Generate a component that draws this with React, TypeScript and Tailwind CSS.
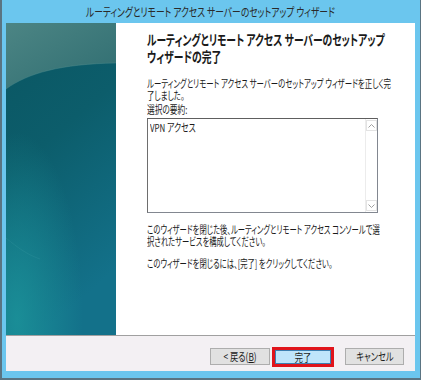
import React from 'react';

const jp = "font-['Noto_Sans_CJK_JP','Noto_Sans',sans-serif] [font-feature-settings:'palt']";

const SidePanel = () => (
  <div className="w-[110px] shrink-0">
    <svg width="110" height="312" viewBox="0 0 110 312" className="block">
      <defs>
        <linearGradient id="base" x1="0" y1="0" x2="0.3" y2="1">
          <stop offset="0" stopColor="#0a5662" />
          <stop offset="0.45" stopColor="#0c5d6b" />
          <stop offset="1" stopColor="#13718a" />
        </linearGradient>
        <radialGradient id="glow" cx="0.1" cy="0.95" r="0.6">
          <stop offset="0" stopColor="#1b9199" stopOpacity="0.9" />
          <stop offset="1" stopColor="#1b9199" stopOpacity="0" />
        </radialGradient>
        <linearGradient id="top" x1="0" y1="0" x2="1" y2="1">
          <stop offset="0" stopColor="#4c8584" />
          <stop offset="1" stopColor="#2f6d71" />
        </linearGradient>
      </defs>
      <rect width="110" height="312" fill="url(#base)" />
      <rect width="110" height="312" fill="url(#glow)" />
      <path d="M0,66 C22,50 55,41 110,40 L110,0 L0,0 Z" fill="url(#top)" />
      <path d="M0,66 C22,50 55,41 110,40" fill="none" stroke="#5a9494" strokeOpacity="0.35" />
      <path d="M0,215 C12,225 22,232 34,236" fill="none" stroke="#3a9aa4" strokeOpacity="0.25" />
    </svg>
  </div>
);

const ListBox = () => (
  <div className="mt-[3px] w-[231px] h-[95px] border border-[#828790] border-t-[#5e5e5e] border-l-[#6e6e6e] bg-white flex">
    <div className={`flex-1 pl-[2px] pt-[1px] text-[11px] leading-[14px] text-[#1a1a1a] ${jp}`}>
      <span className="inline-block origin-left scale-x-[0.72] whitespace-nowrap">VPN アクセス</span>
    </div>
    <div className="w-[12px] border-l border-[#ececec] flex flex-col justify-between items-center bg-white">
      <div className="w-[11px] h-[11px] mt-[1px] border border-[#e3e3e3] flex items-center justify-center">
        <svg width="7" height="4" viewBox="0 0 7 4"><path d="M0.5,3.5 L3.5,0.5 L6.5,3.5" fill="none" stroke="#a0a0a0" /></svg>
      </div>
      <div className="w-[11px] h-[11px] mb-[1px] border border-[#e3e3e3] flex items-center justify-center">
        <svg width="7" height="4" viewBox="0 0 7 4"><path d="M0.5,0.5 L3.5,3.5 L6.5,0.5" fill="none" stroke="#a0a0a0" /></svg>
      </div>
    </div>
  </div>
);

export default function App() {
  return (
    <div className="w-[421px] h-[380px] bg-[#dfe3e6] overflow-hidden">
      <div className="w-[421px] h-[380px] bg-[#6bc6ee] border-l-2 border-r border-b-2 border-[#5a7482] pl-[4px] pr-[5px] pb-[7px] flex flex-col">
        {/* Title bar */}
        <div className={`h-[23px] flex items-center justify-center text-[12px] text-[#2a2a2a] ${jp}`}>
          <span className="inline-block origin-center scale-x-[0.73] whitespace-nowrap">
            ルーティングとリモート アクセス サーバーのセットアップ ウィザード
          </span>
        </div>

        <div className="h-[348px] flex flex-col">
          <div className="h-[312px] flex border-b border-[#a0a0a0] box-content">
            <SidePanel />
            <div className={`flex-1 min-w-0 overflow-hidden bg-white pl-[31px] pt-[8px] text-[#1a1a1a] ${jp}`}>
              <h1 className="origin-left scale-x-[0.7] text-[14px] leading-[17px] font-bold whitespace-nowrap">
                ルーティングとリモート アクセス サーバーのセットアップ
                <br />
                ウィザードの完了
              </h1>
              <p className="mt-[12px] origin-left scale-x-[0.675] text-[11px] leading-[12px] whitespace-nowrap">
                ルーティングとリモート アクセス サーバーのセットアップ ウィザードを正しく完
                <br />
                了しました。
              </p>
              <p className="mt-[2px] origin-left scale-x-[0.7] text-[11px] leading-[12px] whitespace-nowrap">選択の要約:</p>
              <ListBox />
              <p className="mt-[10px] origin-left scale-x-[0.665] text-[11px] leading-[12px] whitespace-nowrap">
                このウィザードを閉じた後、ルーティングとリモート アクセス コンソールで選
                <br />
                択されたサービスを構成してください。
              </p>
              <p className="mt-[10px] origin-left scale-x-[0.665] text-[11px] leading-[12px] whitespace-nowrap">
                このウィザードを閉じるには、[完了] をクリックしてください。
              </p>
            </div>
          </div>

          {/* Button bar */}
          <div className={`flex-1 bg-[#f3f0f3] flex items-start justify-end pr-[11px] pt-[11px] text-[11px] text-[#1a1a1a] ${jp}`}>
            <button className="w-[60px] h-[17px] mt-[1px] bg-[#e1e1e1] border border-[#adadad] leading-[15px] flex items-center justify-center">
              <span className="inline-block scale-x-[0.75] whitespace-nowrap">
                &lt; 戻る(<span className="underline">B</span>)
              </span>
            </button>
            <div className="ml-[2px] w-[62px] h-[20px] border-[3px] border-[#e0141b] flex">
              <button className="flex-1 bg-[#bfe5fb] border border-[#3c7fb1] leading-[12px] flex items-center justify-center">
                <span className="inline-block scale-x-[0.75]">完了</span>
              </button>
            </div>
            <button className="ml-[11px] w-[59px] h-[17px] mt-[1px] bg-[#e1e1e1] border border-[#adadad] leading-[15px] flex items-center justify-center">
              <span className="inline-block scale-x-[0.75] whitespace-nowrap">キャンセル</span>
            </button>
          </div>
        </div>
      </div>
    </div>
  );
}
